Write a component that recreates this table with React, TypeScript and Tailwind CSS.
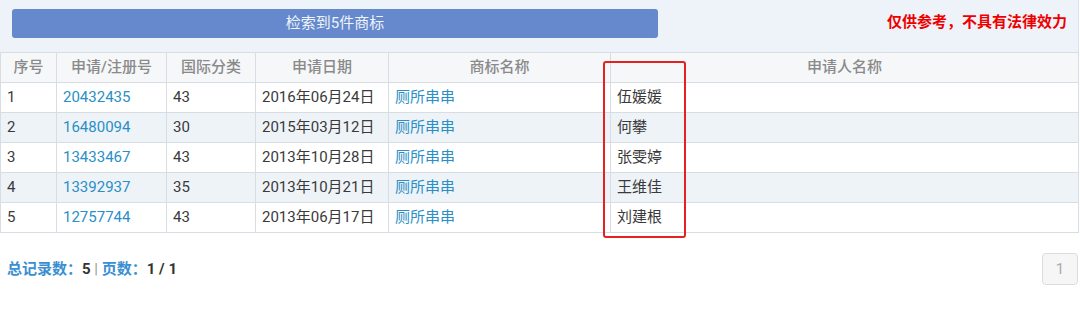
import React from 'react';

const rows = [
  { no: 1, reg: '20432435', cls: '43', date: '2016年06月24日', name: '厕所串串', owner: '伍媛媛' },
  { no: 2, reg: '16480094', cls: '30', date: '2015年03月12日', name: '厕所串串', owner: '何攀' },
  { no: 3, reg: '13433467', cls: '43', date: '2013年10月28日', name: '厕所串串', owner: '张雯婷' },
  { no: 4, reg: '13392937', cls: '35', date: '2013年10月21日', name: '厕所串串', owner: '王维佳' },
  { no: 5, reg: '12757744', cls: '43', date: '2013年06月17日', name: '厕所串串', owner: '刘建根' },
];

const font = { fontFamily: 'Roboto, "Noto Sans CJK SC", sans-serif' };

export default function App() {
  return (
    <div className="relative w-[1080px] h-[310px] bg-white text-[15px] text-[#3a3a3a]" style={font}>
      {/* Top bar */}
      <div className="flex items-center justify-between h-[52px] bg-[#eef3f9] pl-[12px] pr-[11px] border-r border-[#dde3ea] w-[1079px]">
        <div className="w-[646px] h-[29px] mt-[-6px] rounded-[3px] bg-[#6589cc] text-[#eef3fb] flex items-center justify-center">
          检索到5件商标
        </div>
        <div className="mt-[-8px] font-bold text-[#e00] text-[15px]">仅供参考，不具有法律效力</div>
      </div>

      {/* Table */}
      <table className="w-[1079px] border-collapse table-fixed">
        <colgroup>
          <col className="w-[56px]" />
          <col className="w-[110px]" />
          <col className="w-[89px]" />
          <col className="w-[133px]" />
          <col className="w-[222px]" />
          <col />
        </colgroup>
        <thead>
          <tr className="h-[30px] bg-[#f5f7f9] text-[#8a8a8a]">
            {['序号', '申请/注册号', '国际分类', '申请日期', '商标名称', '申请人名称'].map((h) => (
              <th key={h} className="border border-[#d8dde3] font-medium text-center p-0">
                {h}
              </th>
            ))}
          </tr>
        </thead>
        <tbody>
          {rows.map((r, i) => (
            <tr key={r.no} className={`h-[30px] ${i % 2 === 1 ? 'bg-[#eef3f8]' : 'bg-white'}`}>
              <td className="border border-[#d8dde3] px-[6px]">{r.no}</td>
              <td className="border border-[#d8dde3] px-[6px] text-[#2a8fc6]">{r.reg}</td>
              <td className="border border-[#d8dde3] px-[6px]">{r.cls}</td>
              <td className="border border-[#d8dde3] px-[6px]">{r.date}</td>
              <td className="border border-[#d8dde3] px-[6px] text-[#2a8fc6]">{r.name}</td>
              <td className="border border-[#d8dde3] px-[6px]">{r.owner}</td>
            </tr>
          ))}
        </tbody>
      </table>

      {/* Footer */}
      <div className="flex items-center justify-between pl-[7px] pr-[2px] mt-[20px]">
        <div className="text-[15px] font-bold">
          <span className="text-[#3a8fd2]">总记录数：</span>
          <span className="text-[#333]">5</span>
          <span className="text-[#999] font-normal"> | </span>
          <span className="text-[#3a8fd2]">页数：</span>
          <span className="text-[#333]">1 / 1</span>
        </div>
        <div className="w-[36px] h-[32px] rounded-[4px] border border-[#dcdcdc] bg-[#f6f6f6] text-[#aaa] flex items-center justify-center">
          1
        </div>
      </div>

      {/* Highlight box */}
      <div className="absolute left-[603px] top-[61px] w-[83px] h-[177px] border-2 border-[#e42222] rounded-[3px]" />
    </div>
  );
}
